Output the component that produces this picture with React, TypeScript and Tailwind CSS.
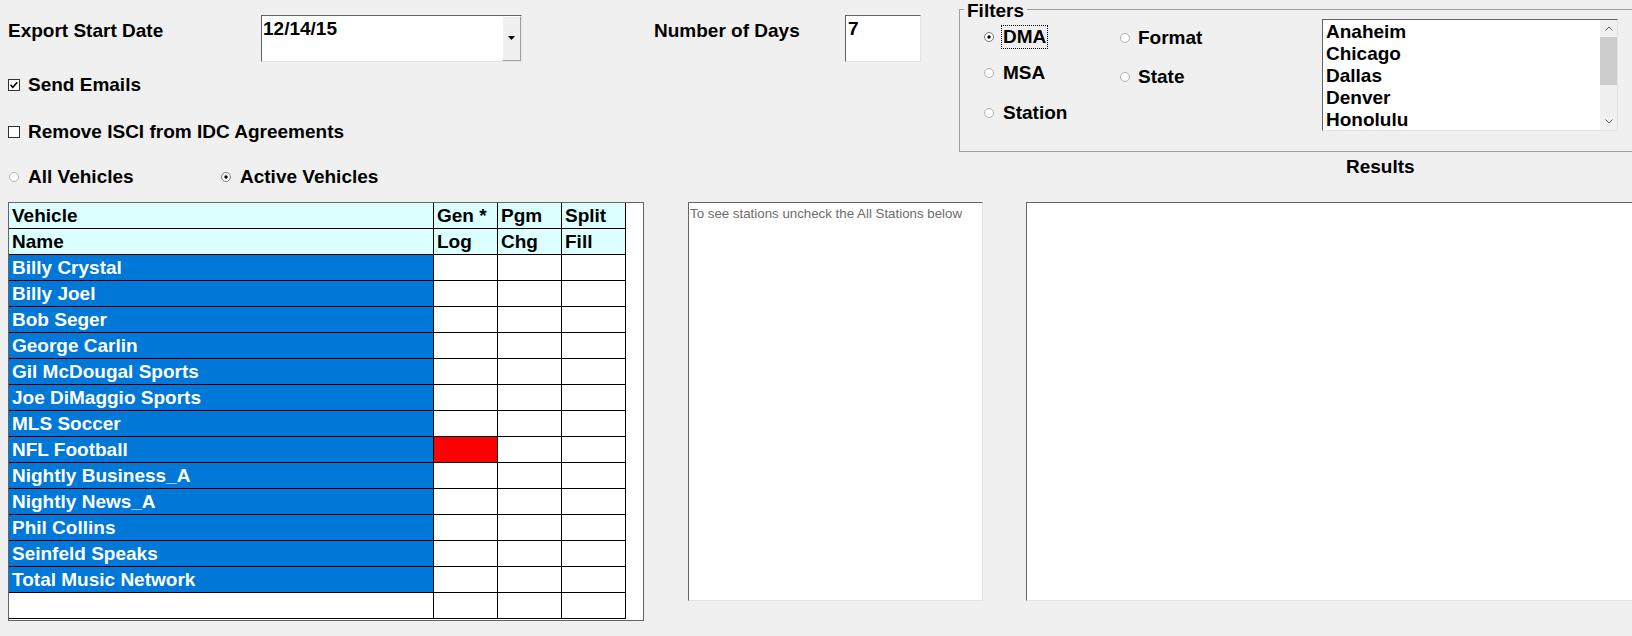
import React from "react";

const vehicles = [
  "Billy Crystal",
  "Billy Joel",
  "Bob Seger",
  "George Carlin",
  "Gil McDougal Sports",
  "Joe DiMaggio Sports",
  "MLS Soccer",
  "NFL Football",
  "Nightly Business_A",
  "Nightly News_A",
  "Phil Collins",
  "Seinfeld Speaks",
  "Total Music Network",
];

const cities = ["Anaheim", "Chicago", "Dallas", "Denver", "Honolulu"];

function Radio({ checked }: { checked?: boolean }) {
  return (
    <svg width="10" height="10" viewBox="0 0 10 10" className="shrink-0">
      <circle cx="5" cy="5" r="4.5" fill="#fff" stroke={checked ? "#7a7a7a" : "#b0b0b0"} />
      {checked && <circle cx="5" cy="5" r="1.7" fill="#000" />}
    </svg>
  );
}

function Check({ checked }: { checked?: boolean }) {
  return (
    <div className="w-[12px] h-[12px] shrink-0 border border-[#333333] bg-white flex items-center justify-center">
      {checked && (
        <svg width="10" height="10" viewBox="0 0 10 10">
          <path d="M1.5 4.8 L3.8 7.2 L8.3 2.2" fill="none" stroke="#000" strokeWidth="1.6" />
        </svg>
      )}
    </div>
  );
}

function Chevron({ up }: { up?: boolean }) {
  return (
    <svg width="8" height="5" viewBox="0 0 8 5">
      <polyline
        points={up ? "0.5,4.5 4,1 7.5,4.5" : "0.5,0.5 4,4 7.5,0.5"}
        fill="none"
        stroke="#606060"
        strokeWidth="1"
      />
    </svg>
  );
}

function HeaderRow({ a, b, c, d }: { a: string; b: string; c: string; d: string }) {
  const cell = "border-r border-black bg-[#dcffff] pl-[3px] whitespace-nowrap overflow-hidden";
  return (
    <div className="flex w-[617px] h-[26px] border-b border-black leading-[25px]">
      <div className={`w-[425px] ${cell}`}>{a}</div>
      <div className={`w-[64px] ${cell}`}>{b}</div>
      <div className={`w-[64px] ${cell}`}>{c}</div>
      <div className={`w-[64px] ${cell}`}>{d}</div>
    </div>
  );
}

function DataRow({ name, red }: { name?: string; red?: boolean }) {
  return (
    <div className="flex w-[617px] h-[26px] border-b border-black leading-[25px]">
      <div
        className={
          name
            ? "w-[425px] border-r border-black bg-[#0078d7] text-white pl-[3px] whitespace-nowrap overflow-hidden"
            : "w-[425px] border-r border-black bg-white"
        }
      >
        {name}
      </div>
      <div className={red ? "w-[64px] border-r border-black bg-[#ff0000]" : "w-[64px] border-r border-black bg-white"} />
      <div className="w-[64px] border-r border-black bg-white" />
      <div className="w-[64px] border-r border-black bg-white" />
    </div>
  );
}

export default function App() {
  return (
    <div className="w-[1632px] h-[636px] overflow-hidden bg-[#f0f0f0] font-['Liberation_Sans',Arial,sans-serif] text-[19px] font-bold leading-[22px] text-black">
      {/* Top section */}
      <div className="flex h-[202px]">
        <div className="w-[959px] shrink-0 flex flex-col">
          {/* Row 1 */}
          <div className="flex items-start pt-[15px] pl-[8px]">
            <div className="w-[253px] shrink-0 pt-[5px]">Export Start Date</div>
            <div className="w-[261px] h-[47px] shrink-0 flex border-t border-l border-t-[#646464] border-l-[#646464] border-b border-r border-b-[#e3e3e3] border-r-[#e3e3e3] bg-white">
              <div className="flex-1 pl-[1px] pt-[2px]">12/14/15</div>
              <div className="w-[19px] h-full flex justify-center pt-[19px] bg-[#f0f0f0] border-t border-l border-t-white border-l-white border-b border-r border-b-[#a0a0a0] border-r-[#a0a0a0]">
                <svg width="7" height="4" viewBox="0 0 7 4">
                  <polygon points="0,0 7,0 3.5,4" fill="#000" />
                </svg>
              </div>
            </div>
            <div className="w-[191px] shrink-0 ml-[132px] pt-[5px]">Number of Days</div>
            <div className="w-[76px] h-[47px] shrink-0 border-t border-l border-t-[#646464] border-l-[#646464] border-b border-r border-b-[#e3e3e3] border-r-[#e3e3e3] bg-white pl-[2px] pt-[2px]">
              7
            </div>
          </div>
          {/* Row 2 */}
          <div className="flex items-center gap-[8px] pl-[8px] mt-[12px]">
            <Check checked />
            <span>Send Emails</span>
          </div>
          {/* Row 3 */}
          <div className="flex items-center gap-[8px] pl-[8px] mt-[25px]">
            <Check />
            <span>Remove ISCI from IDC Agreements</span>
          </div>
          {/* Row 4 */}
          <div className="flex items-center pl-[9px] mt-[23px]">
            <div className="w-[212px] flex items-center gap-[9px]">
              <Radio />
              <span>All Vehicles</span>
            </div>
            <div className="flex items-center gap-[9px]">
              <Radio checked />
              <span>Active Vehicles</span>
            </div>
          </div>
        </div>

        {/* Right column: Filters group box */}
        <div className="flex-1 flex flex-col">
          <div className="w-[700px] shrink-0 flex flex-col">
            {/* Group box caption row with top border segments */}
            <div className="flex items-start h-[18px]">
              <div className="mt-[9px] w-[5px] h-[9px] border-t border-l border-[#a0a0a0]" />
              <div className="px-[3px] pt-[1px] leading-[20px]">Filters</div>
              <div className="mt-[9px] flex-1 h-[9px] border-t border-r border-[#a0a0a0]" />
            </div>
            <div className="h-[134px] flex pl-[24px] border-l border-r border-b border-[#a0a0a0]">
              <div className="w-[136px] shrink-0 flex flex-col">
                <div className="flex items-center gap-[7px] mt-[7px]">
                  <Radio checked />
                  <span className="border border-dotted border-black px-[1px]">DMA</span>
                </div>
                <div className="flex items-center gap-[7px] mt-[12px]">
                  <Radio />
                  <span className="border border-transparent px-[1px]">MSA</span>
                </div>
                <div className="flex items-center gap-[7px] mt-[16px]">
                  <Radio />
                  <span className="border border-transparent px-[1px]">Station</span>
                </div>
              </div>
              <div className="w-[202px] shrink-0 flex flex-col">
                <div className="flex items-center gap-[8px] mt-[9px]">
                  <Radio />
                  <span>Format</span>
                </div>
                <div className="flex items-center gap-[8px] mt-[17px]">
                  <Radio />
                  <span>State</span>
                </div>
              </div>
              <div className="mt-[1px] w-[296px] h-[112px] shrink-0 flex border-t border-l border-t-[#646464] border-l-[#646464] border-b border-r border-b-[#e3e3e3] border-r-[#e3e3e3] bg-white overflow-hidden">
                <div className="flex-1 pl-[3px] pt-[1px] overflow-hidden">
                  {cities.map((c) => (
                    <div key={c} className="h-[22px] leading-[22px] whitespace-nowrap">
                      {c}
                    </div>
                  ))}
                </div>
                <div className="w-[17px] shrink-0 flex flex-col bg-[#f0f0f0]">
                  <div className="h-[17px] flex items-center justify-center">
                    <Chevron up />
                  </div>
                  <div className="h-[48px] bg-[#cdcdcd]" />
                  <div className="flex-1" />
                  <div className="h-[17px] flex items-center justify-center">
                    <Chevron />
                  </div>
                </div>
              </div>
            </div>
          </div>
          <div className="mt-[4px] pl-[387px]">Results</div>
        </div>
      </div>

      {/* Bottom section */}
      <div className="flex items-start pl-[8px]">
        <div className="w-[636px] h-[419px] shrink-0 border border-[#646464] bg-white overflow-hidden">
          <HeaderRow a="Vehicle" b="Gen *" c="Pgm" d="Split" />
          <HeaderRow a="Name" b="Log" c="Chg" d="Fill" />
          {vehicles.map((v) => (
            <DataRow key={v} name={v} red={v === "NFL Football"} />
          ))}
          <DataRow />
        </div>
        <div className="ml-[44px] w-[295px] h-[399px] shrink-0 border-t border-l border-t-[#646464] border-l-[#646464] border-b border-r border-b-[#e3e3e3] border-r-[#e3e3e3] bg-white pl-[1px] pt-[3px]">
          <div className="font-normal text-[13.3px] leading-[15px] text-[#6d6d6d] whitespace-nowrap">
            To see stations uncheck the All Stations below
          </div>
        </div>
        <div className="ml-[43px] w-[620px] h-[399px] shrink-0 border-t border-l border-t-[#646464] border-l-[#646464] border-b border-b-[#e3e3e3] bg-white" />
      </div>
    </div>
  );
}
